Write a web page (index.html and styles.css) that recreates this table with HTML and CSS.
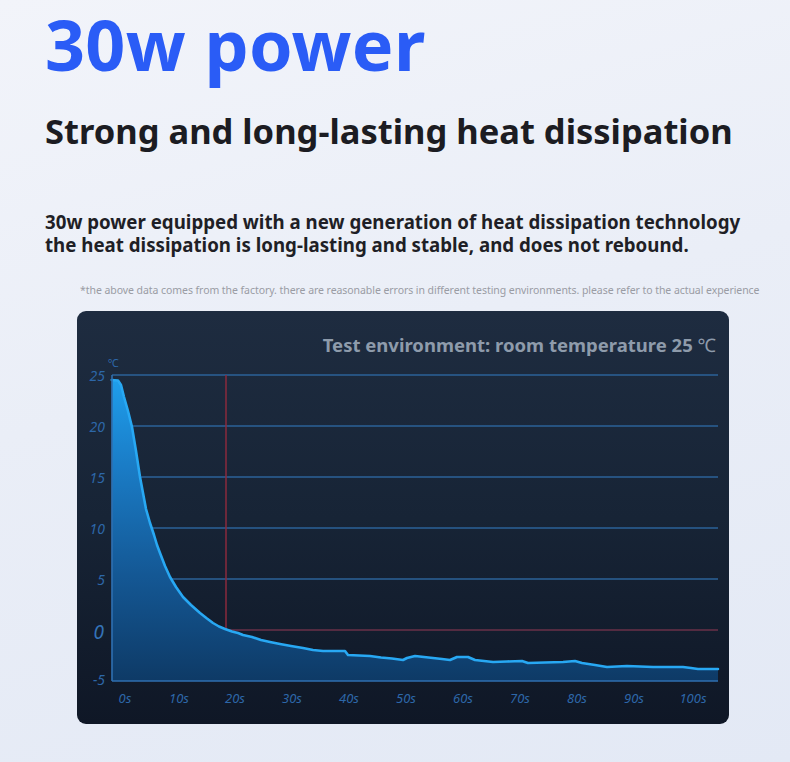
FILE: index.html
```html
<!DOCTYPE html>
<html lang="en">
<head>
<meta charset="utf-8">
<title>30w power</title>
<link rel="stylesheet" href="styles.css">
</head>
<body>
<main class="page">
  <h1 class="title">30w power</h1>
  <h2 class="subtitle">Strong and long-lasting heat dissipation</h2>
  <p class="desc">30w power equipped with a new generation of heat dissipation technology<br>the heat dissipation is long-lasting and stable, and does not rebound.</p>
  <p class="note">*the above data comes from the factory. there are reasonable errors in different testing environments. please refer to the actual experience</p>
  <section class="card">
    <svg class="chart" width="652" height="413" viewBox="0 0 652 413" xmlns="http://www.w3.org/2000/svg">
      <defs>
        <linearGradient id="fill" x1="0" y1="64" x2="0" y2="370" gradientUnits="userSpaceOnUse">
          <stop offset="0" stop-color="#1fa0ee"/>
          <stop offset="0.3" stop-color="#1a7cc6"/>
          <stop offset="0.65" stop-color="#145895"/>
          <stop offset="1" stop-color="#0e3a66"/>
        </linearGradient>
      </defs>
      <text class="chart-title" x="639" y="41" text-anchor="end">Test environment: room temperature 25 <tspan class="deg">℃</tspan></text>

      <g class="grid">
        <line x1="35" y1="64" x2="641" y2="64"/>
        <line x1="35" y1="115" x2="641" y2="115"/>
        <line x1="35" y1="166" x2="641" y2="166"/>
        <line x1="35" y1="217" x2="641" y2="217"/>
        <line x1="35" y1="268" x2="641" y2="268"/>
      </g>
      <line class="zero" x1="35" y1="319" x2="641" y2="319"/>
      <line class="marker" x1="149" y1="64" x2="149" y2="370"/>

      <path class="area" d="M34.7,69 L41,69.5 L44,74 L47,86 L51,100 L55,116 L59,140 L63,166 L66,182 L69,198 L73,212 L77,224 L80,234 L83,242 L88,255 L93,266 L99,276 L106,286 L114,294 L123,302 L130,307.5 L136,312 L142,315.5 L148,318 L155,320.5 L161,322 L166,324 L175,326 L184,329 L193,331 L203,333 L214,335 L226,337 L236,339 L246,340 L257,340 L268,340 L271,344 L282,344.5 L293,345 L304,346.5 L315,347.5 L326,349 L330,347 L338,345 L347,346 L356,347 L365,348 L373,349 L380,346 L391,346 L398,349 L407,350 L416,351 L430,350.5 L445,350 L451,352 L468,351.5 L486,351 L498,350 L505,352 L518,354 L530,356 L540,355.5 L550,355 L563,355.5 L576,356 L591,356 L606,356 L614,357 L621,358 L641,358 L641,370 L34.7,370 Z"/>
      <path class="curve" d="M34.7,69 L41,69.5 L44,74 L47,86 L51,100 L55,116 L59,140 L63,166 L66,182 L69,198 L73,212 L77,224 L80,234 L83,242 L88,255 L93,266 L99,276 L106,286 L114,294 L123,302 L130,307.5 L136,312 L142,315.5 L148,318 L155,320.5 L161,322 L166,324 L175,326 L184,329 L193,331 L203,333 L214,335 L226,337 L236,339 L246,340 L257,340 L268,340 L271,344 L282,344.5 L293,345 L304,346.5 L315,347.5 L326,349 L330,347 L338,345 L347,346 L356,347 L365,348 L373,349 L380,346 L391,346 L398,349 L407,350 L416,351 L430,350.5 L445,350 L451,352 L468,351.5 L486,351 L498,350 L505,352 L518,354 L530,356 L540,355.5 L550,355 L563,355.5 L576,356 L591,356 L606,356 L614,357 L621,358 L641,358"/>

      <line class="axis" x1="35" y1="370" x2="641" y2="370"/>
      <line class="axis" x1="35" y1="64" x2="35" y2="370"/>

      <g class="ylabels" text-anchor="end">
        <text x="28" y="69.5">25</text>
        <text x="28" y="120.5">20</text>
        <text x="28" y="171.5">15</text>
        <text x="28" y="222.5">10</text>
        <text x="28" y="273.5">5</text>
        <text class="big" x="27" y="328">0</text>
        <text x="28" y="374">-5</text>
      </g>
      <text class="unit" x="31" y="56">℃</text>

      <g class="xlabels" text-anchor="middle">
        <text x="48" y="392">0s</text>
        <text x="102" y="392">10s</text>
        <text x="158" y="392">20s</text>
        <text x="215" y="392">30s</text>
        <text x="272" y="392">40s</text>
        <text x="329" y="392">50s</text>
        <text x="386" y="392">60s</text>
        <text x="443" y="392">70s</text>
        <text x="500" y="392">80s</text>
        <text x="557" y="392">90s</text>
        <text x="616" y="392">100s</text>
      </g>
    </svg>
  </section>
</main>
</body>
</html>
```
FILE: styles.css
```css
html, body {
  margin: 0;
  padding: 0;
}
body {
  width: 790px;
  min-height: 762px;
  background: linear-gradient(165deg, #f2f4fa 0%, #eaeef7 45%, #e3e9f5 100%);
  font-family: "Noto Sans", "Open Sans", sans-serif;
  overflow: hidden;
}
.page {
  display: flex;
  flex-direction: column;
  padding: 4px 0 0 45px;
}
.title {
  margin: 0;
  font-size: 70px;
  line-height: 80px;
  font-weight: 700;
  color: #2a5cf6;
  letter-spacing: 0.3px;
}
.subtitle {
  margin: 27px 0 0;
  font-size: 34.5px;
  line-height: 40px;
  font-weight: 700;
  color: #1c1c22;
  white-space: nowrap;
}
.desc {
  margin: 59px 0 0;
  font-size: 18.7px;
  line-height: 23px;
  font-weight: 700;
  color: #1f1f26;
  white-space: nowrap;
}
.note {
  margin: 27px 0 0 35px;
  font-size: 10.5px;
  line-height: 14px;
  color: #9a9ca4;
  white-space: nowrap;
  letter-spacing: -0.06px;
}
.card {
  margin: 14px 0 0 32px;
  width: 652px;
  height: 413px;
  border-radius: 9px;
  overflow: hidden;
  background: linear-gradient(180deg, #1e2c40 0%, #172436 50%, #0f1726 100%);
}
.chart {
  display: block;
}
.chart-title {
  font-family: "Noto Sans", sans-serif;
  font-size: 18.5px;
  font-weight: 700;
  fill: #8e9bab;
}
.chart-title .deg {
  font-weight: 400;
}
.grid line {
  stroke: #2b6299;
  stroke-width: 1.6;
}
.zero {
  stroke: #6a3049;
  stroke-width: 1.5;
}
.marker {
  stroke: #8a2a3c;
  stroke-width: 1.5;
}
.axis {
  stroke: #2f6fb0;
  stroke-width: 1.6;
}
.area {
  fill: url(#fill);
}
.curve {
  fill: none;
  stroke: #28a8f3;
  stroke-width: 2.6;
  stroke-linejoin: round;
  stroke-linecap: round;
}
.ylabels text, .xlabels text {
  font-family: "Noto Sans", sans-serif;
  font-style: italic;
  fill: #2d67a8;
}
.ylabels text {
  font-size: 14px;
}
.ylabels .big {
  font-size: 19px;
  fill: #3473b8;
}
.xlabels text {
  font-size: 13px;
}
.unit {
  font-family: "Noto Sans", "Noto Sans CJK SC", sans-serif;
  font-size: 11px;
  fill: #2d67a8;
}
```
